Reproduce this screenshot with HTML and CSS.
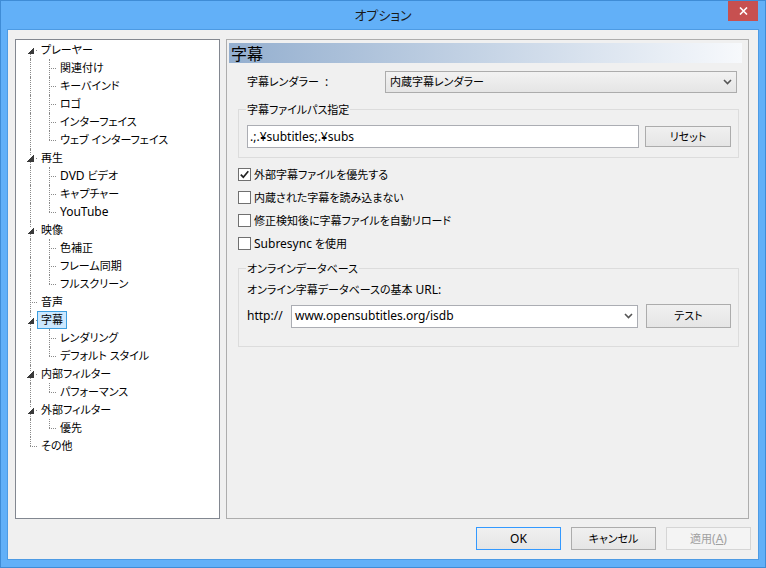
FILE: index.html
```html
<!DOCTYPE html>
<html lang="ja">
<head>
<meta charset="utf-8">
<title>オプション</title>
<link rel="stylesheet" href="styles.css">
</head>
<body>
<div class="window">
  <div class="titlebar"><span class="title">オプション</span></div>
  <div class="close"><svg width="9" height="8" viewBox="0 0 9 8"><path d="M1 0.5 L8 7.5 M8 0.5 L1 7.5" stroke="#fff" stroke-width="1.6" fill="none"/></svg></div>
  <div class="client">
    <div class="panes">
      <div class="tree">
        <div class="node"><span class="ga exp first"></span><span class="lb">プレーヤー</span></div>
        <div class="node"><span class="ga"></span><span class="gb"></span><span class="lb">関連付け</span></div>
        <div class="node"><span class="ga"></span><span class="gb"></span><span class="lb">キーバインド</span></div>
        <div class="node"><span class="ga"></span><span class="gb"></span><span class="lb">ロゴ</span></div>
        <div class="node"><span class="ga"></span><span class="gb"></span><span class="lb">インターフェイス</span></div>
        <div class="node"><span class="ga"></span><span class="gb end"></span><span class="lb">ウェブ インターフェイス</span></div>
        <div class="node"><span class="ga exp"></span><span class="lb">再生</span></div>
        <div class="node"><span class="ga"></span><span class="gb"></span><span class="lb"><span class="lat">DVD</span> ビデオ</span></div>
        <div class="node"><span class="ga"></span><span class="gb"></span><span class="lb">キャプチャー</span></div>
        <div class="node"><span class="ga"></span><span class="gb end"></span><span class="lb lat">YouTube</span></div>
        <div class="node"><span class="ga exp"></span><span class="lb">映像</span></div>
        <div class="node"><span class="ga"></span><span class="gb"></span><span class="lb">色補正</span></div>
        <div class="node"><span class="ga"></span><span class="gb"></span><span class="lb">フレーム同期</span></div>
        <div class="node"><span class="ga"></span><span class="gb end"></span><span class="lb">フルスクリーン</span></div>
        <div class="node"><span class="ga leaf"></span><span class="lb">音声</span></div>
        <div class="node"><span class="ga exp"></span><span class="lb sel">字幕</span></div>
        <div class="node"><span class="ga"></span><span class="gb"></span><span class="lb">レンダリング</span></div>
        <div class="node"><span class="ga"></span><span class="gb end"></span><span class="lb">デフォルト スタイル</span></div>
        <div class="node"><span class="ga exp"></span><span class="lb">内部フィルター</span></div>
        <div class="node"><span class="ga"></span><span class="gb end"></span><span class="lb">パフォーマンス</span></div>
        <div class="node"><span class="ga exp"></span><span class="lb">外部フィルター</span></div>
        <div class="node"><span class="ga"></span><span class="gb end"></span><span class="lb">優先</span></div>
        <div class="node"><span class="ga leaf last"></span><span class="lb">その他</span></div>
      </div>
      <div class="page">
        <div class="hdr">字幕</div>
        <div class="rrow">
          <span class="rlbl">字幕レンダラー<span class="colon lat">:</span></span>
          <div class="combo ro"><span>内蔵字幕レンダラー</span><svg class="chev" width="9" height="6" viewBox="0 0 9 6"><path d="M1 1 L4.5 4.5 L8 1" stroke="#555" stroke-width="1.6" fill="none"/></svg></div>
        </div>
        <div class="group g1">
          <div class="legend"><span>字幕ファイルパス指定</span></div>
          <div class="grow">
            <div class="textbox lat">.;.¥subtitles;.¥subs</div>
            <div class="btn btn-reset">リセット</div>
          </div>
        </div>
        <div class="checks">
          <div class="check"><span class="box"><svg width="11" height="11" viewBox="0 0 11 11"><path d="M1.8 5.6 L4.3 8.2 L9.3 2.2" stroke="#222" stroke-width="1.7" fill="none"/></svg></span><span>外部字幕ファイルを優先する</span></div>
          <div class="check"><span class="box"></span><span>内蔵された字幕を読み込まない</span></div>
          <div class="check"><span class="box"></span><span>修正検知後に字幕ファイルを自動リロード</span></div>
          <div class="check"><span class="box"></span><span><span class="lat">Subresync</span> を使用</span></div>
        </div>
        <div class="group g2">
          <div class="legend"><span>オンラインデータベース</span></div>
          <div class="urllbl">オンライン字幕データベースの基本 <span class="lat">URL:</span></div>
          <div class="urow">
            <span class="http lat">http://</span>
            <div class="combo ed"><span class="lat">www.opensubtitles.org/isdb</span><svg class="chev" width="9" height="6" viewBox="0 0 9 6"><path d="M1 1 L4.5 4.5 L8 1" stroke="#555" stroke-width="1.6" fill="none"/></svg></div>
            <div class="btn btn-test">テスト</div>
          </div>
        </div>
      </div>
    </div>
    <div class="buttons">
      <div class="btn btn-dlg btn-ok lat">OK</div>
      <div class="btn btn-dlg">キャンセル</div>
      <div class="btn btn-dlg btn-dis">適用<span class="lat">(<u>A</u>)</span></div>
    </div>
  </div>
</div>
</body>
</html>
```

FILE: styles.css
```css
* { box-sizing: border-box; }
html, body { margin: 0; padding: 0; }
body {
  width: 766px;
  height: 568px;
  overflow: hidden;
  font-family: "Noto Sans", "Noto Sans CJK JP", sans-serif;
  font-size: 11px;
  line-height: 16px;
  font-feature-settings: "palt";
  color: #000;
}
.lat { font-size: 12px; }
.window {
  position: relative;
  width: 766px;
  height: 568px;
  background: #62b0f8;
  border: 1px solid #3f8cd6;
  padding: 0 6px 7px;
  display: flex;
  flex-direction: column;
}
.titlebar {
  height: 28px;
  display: flex;
  align-items: center;
  justify-content: center;
  font-family: "Noto Sans CJK JP", sans-serif;
  font-size: 13px;
  color: #1a1a1a;
}
.close {
  position: absolute;
  top: 0;
  right: 7px;
  width: 30px;
  height: 20px;
  background: #c75050;
  display: flex;
  align-items: center;
  justify-content: center;
}
.client {
  flex: 1;
  border: 1px solid #4d9be4;
  background: #f0f0f0;
  padding: 9px 7px 9px;
  display: flex;
  flex-direction: column;
}
.panes {
  display: flex;
  gap: 6px;
  height: 480px;
}
/* tree */
.tree {
  width: 205px;
  height: 480px;
  border: 1px solid #828790;
  background: #fff;
  padding: 1px 0 0 6px;
}
.node {
  display: flex;
  height: 18px;
}
.ga, .gb {
  position: relative;
  flex: none;
  height: 18px;
}
.ga { width: 15px; }
.gb { width: 19px; }
.ga::before, .gb::before {
  content: "";
  position: absolute;
  top: 0;
  bottom: 0;
  border-left: 1px dotted #8a8a8a;
}
.ga::before { left: 8px; }
.gb::before { left: 12px; }
.ga.first::before { top: 9px; }
.ga.last::before { bottom: 9px; }
.gb.end::before { bottom: 9px; }
.gb::after, .ga.leaf::after {
  content: "";
  position: absolute;
  top: 9px;
  border-top: 1px dotted #8a8a8a;
}
.gb::after { left: 12px; width: 7px; }
.ga.leaf::after { left: 8px; width: 7px; }
.ga.exp {
  background: linear-gradient(#8a8a8a, #8a8a8a) no-repeat 14px 9px / 1px 1px;
}
.ga.exp::after {
  content: "";
  position: absolute;
  left: 5px;
  top: 6px;
  width: 7px;
  height: 7px;
  background: linear-gradient(135deg, #fff 50%, #3a3a3a 50%);
}
.lb {
  border: 1px solid transparent;
  padding: 0 3px;
  line-height: 16px;
  white-space: nowrap;
}
.lb.sel {
  background: #cce8ff;
  border-color: #3c9ee0;
}
/* page */
.page {
  width: 523px;
  height: 480px;
  border: 1px solid #adadad;
  background: #f0f0f0;
  display: flex;
  flex-direction: column;
  align-items: flex-start;
}
.hdr {
  margin: 3px 0 0 2px;
  width: 513px;
  height: 20px;
  padding-left: 2px;
  font-family: "Noto Sans CJK JP", sans-serif;
  font-size: 16px;
  line-height: 20px;
  color: #000;
  background: linear-gradient(to right, #94afcf, #f7f9fc);
}
.rrow {
  display: flex;
  align-items: center;
  margin-top: 8px;
  height: 22px;
}
.rlbl { margin-left: 20px; width: 138px; }
.colon { margin-left: 6px; }
.combo {
  display: flex;
  align-items: center;
  justify-content: space-between;
  white-space: nowrap;
}
.combo.ro {
  width: 352px;
  height: 22px;
  border: 1px solid #acacac;
  background: linear-gradient(#f2f2f2, #e5e5e5);
  padding: 0 4px 0 4px;
}
.combo.ed {
  width: 347px;
  height: 23px;
  border: 1px solid #abadb3;
  background: #fff;
  padding: 0 4px 0 3px;
}
.group {
  margin-left: 11px;
  width: 501px;
  border: 1px solid #dcdcdc;
}
.g1 { margin-top: 16px; padding-bottom: 9px; }
.g2 { margin-top: 13px; padding-bottom: 18px; }
.legend {
  display: flex;
  height: 16px;
  margin-top: -8px;
  line-height: 16px;
}
.legend span {
  margin-left: 7px;
  padding: 0 1px;
  background: #f0f0f0;
}
.grow {
  display: flex;
  align-items: center;
  margin: 7px 0 0 8px;
  height: 23px;
}
.textbox {
  width: 392px;
  height: 23px;
  border: 1px solid #abadb3;
  background: #fff;
  padding-left: 2px;
  line-height: 21px;
}
.btn {
  display: flex;
  align-items: center;
  justify-content: center;
  border: 1px solid #acacac;
  background: linear-gradient(#f0f0f0, #e5e5e5);
  white-space: nowrap;
}
.btn-reset { margin-left: 6px; width: 86px; height: 21px; }
.btn-test { margin-left: 8px; width: 85px; height: 24px; }
.checks { margin: 5px 0 0 11px; }
.check {
  display: flex;
  align-items: center;
  height: 23px;
}
.box {
  width: 13px;
  height: 13px;
  border: 1px solid #707070;
  background: #fff;
  margin-right: 3px;
  display: flex;
}
.urllbl { margin: 5px 0 0 8px; line-height: 16px; }
.urow {
  display: flex;
  align-items: center;
  margin: 6px 0 0 8px;
  height: 24px;
}
.http { width: 44px; }
.buttons {
  display: flex;
  justify-content: flex-end;
  gap: 10px;
  margin-top: 8px;
}
.btn-dlg { width: 85px; height: 23px; }
.btn-ok { border-color: #3399ff; }
.btn-dis {
  color: #a0a0a0;
  border-color: #d5d5d5;
  background: #f4f4f4;
}
```
